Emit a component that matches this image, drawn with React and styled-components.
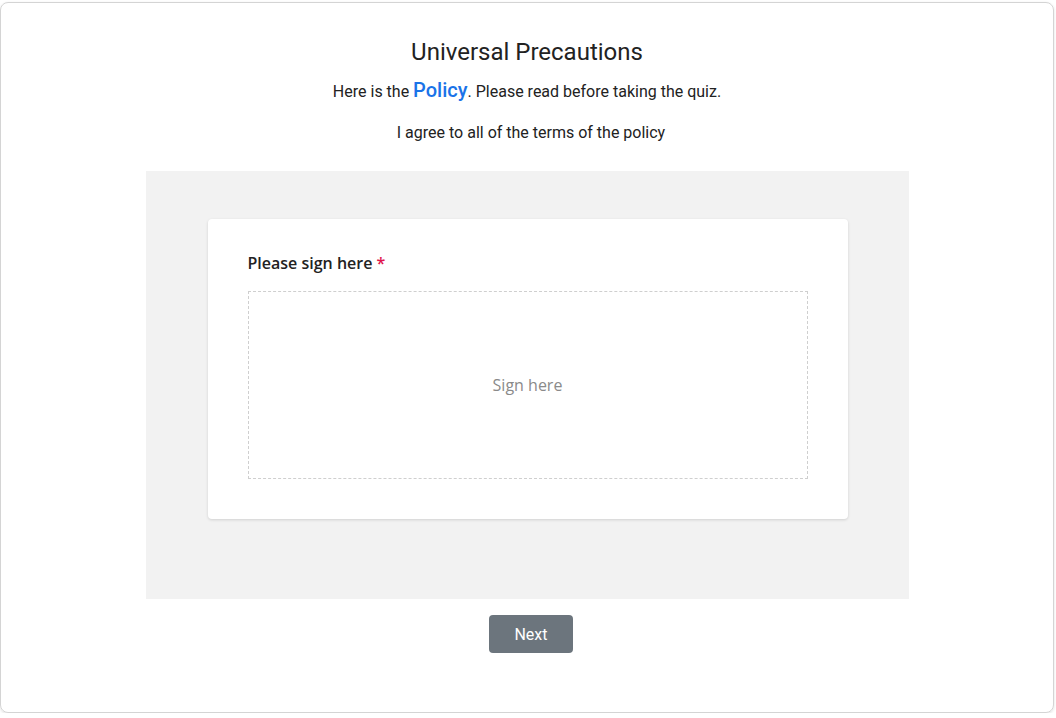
import React from "react";
import styled, { createGlobalStyle } from "styled-components";

const GlobalStyle = createGlobalStyle`
  body {
    margin: 0;
    background: #ffffff;
    font-family: Roboto, "Liberation Sans", sans-serif;
  }
`;

const Frame = styled.div`
  box-sizing: border-box;
  width: 1054px;
  height: 711px;
  margin-top: 2px;
  border: 1px solid #d4d4d4;
  border-radius: 8px;
  box-shadow: 0 1px 3px rgba(0, 0, 0, 0.12);
  display: flex;
  flex-direction: column;
  align-items: center;
  padding-top: 35px;
`;

const Title = styled.h1`
  margin: 0;
  font-size: 24px;
  font-weight: 400;
  line-height: 28px;
  color: #222;
`;

const Intro = styled.p`
  margin: 11px 0 0;
  font-size: 16px;
  line-height: 26px;
  color: #222;
`;

const PolicyLink = styled.a`
  font-size: 20px;
  font-weight: 500;
  color: #1a73e8;
  text-decoration: none;
`;

const Agree = styled.p`
  margin: 18px 0 0 8px;
  font-size: 16px;
  line-height: 20px;
  color: #222;
`;

const Panel = styled.div`
  box-sizing: border-box;
  width: 763px;
  margin-top: 28px;
  background: #f2f2f2;
  padding: 48px 61px 80px 62px;
`;

const Card = styled.div`
  background: #fff;
  border-radius: 4px;
  box-shadow: 0 1px 3px rgba(0, 0, 0, 0.14);
  padding: 33px 40px 40px;
`;

const Label = styled.div`
  font-family: "Open Sans", "Liberation Sans", sans-serif;
  font-size: 16px;
  font-weight: 600;
  line-height: 22px;
  color: #222;
`;

const Required = styled.span`
  color: #e0144c;
  margin-left: 4px;
`;

const SignBox = styled.div`
  box-sizing: border-box;
  height: 188px;
  margin-top: 17px;
  border: 1px dashed #cfcfcf;
  display: flex;
  align-items: center;
  justify-content: center;
  font-family: "Open Sans", "Liberation Sans", sans-serif;
  font-size: 16px;
  color: #8a8a8a;
`;

const NextButton = styled.button`
  margin-top: 16px;
  margin-left: 8px;
  width: 84px;
  height: 38px;
  border: none;
  border-radius: 4px;
  background: #6c757d;
  color: #fff;
  font-family: Roboto, "Liberation Sans", sans-serif;
  font-size: 16px;
  cursor: pointer;
`;

export default function App() {
  return (
    <>
      <GlobalStyle />
      <Frame>
        <Title>Universal Precautions</Title>
        <Intro>
          Here is the <PolicyLink href="#">Policy</PolicyLink>. Please read before taking the quiz.
        </Intro>
        <Agree>I agree to all of the terms of the policy</Agree>
        <Panel>
          <Card>
            <Label>
              Please sign here<Required>*</Required>
            </Label>
            <SignBox>Sign here</SignBox>
          </Card>
        </Panel>
        <NextButton>Next</NextButton>
      </Frame>
    </>
  );
}
